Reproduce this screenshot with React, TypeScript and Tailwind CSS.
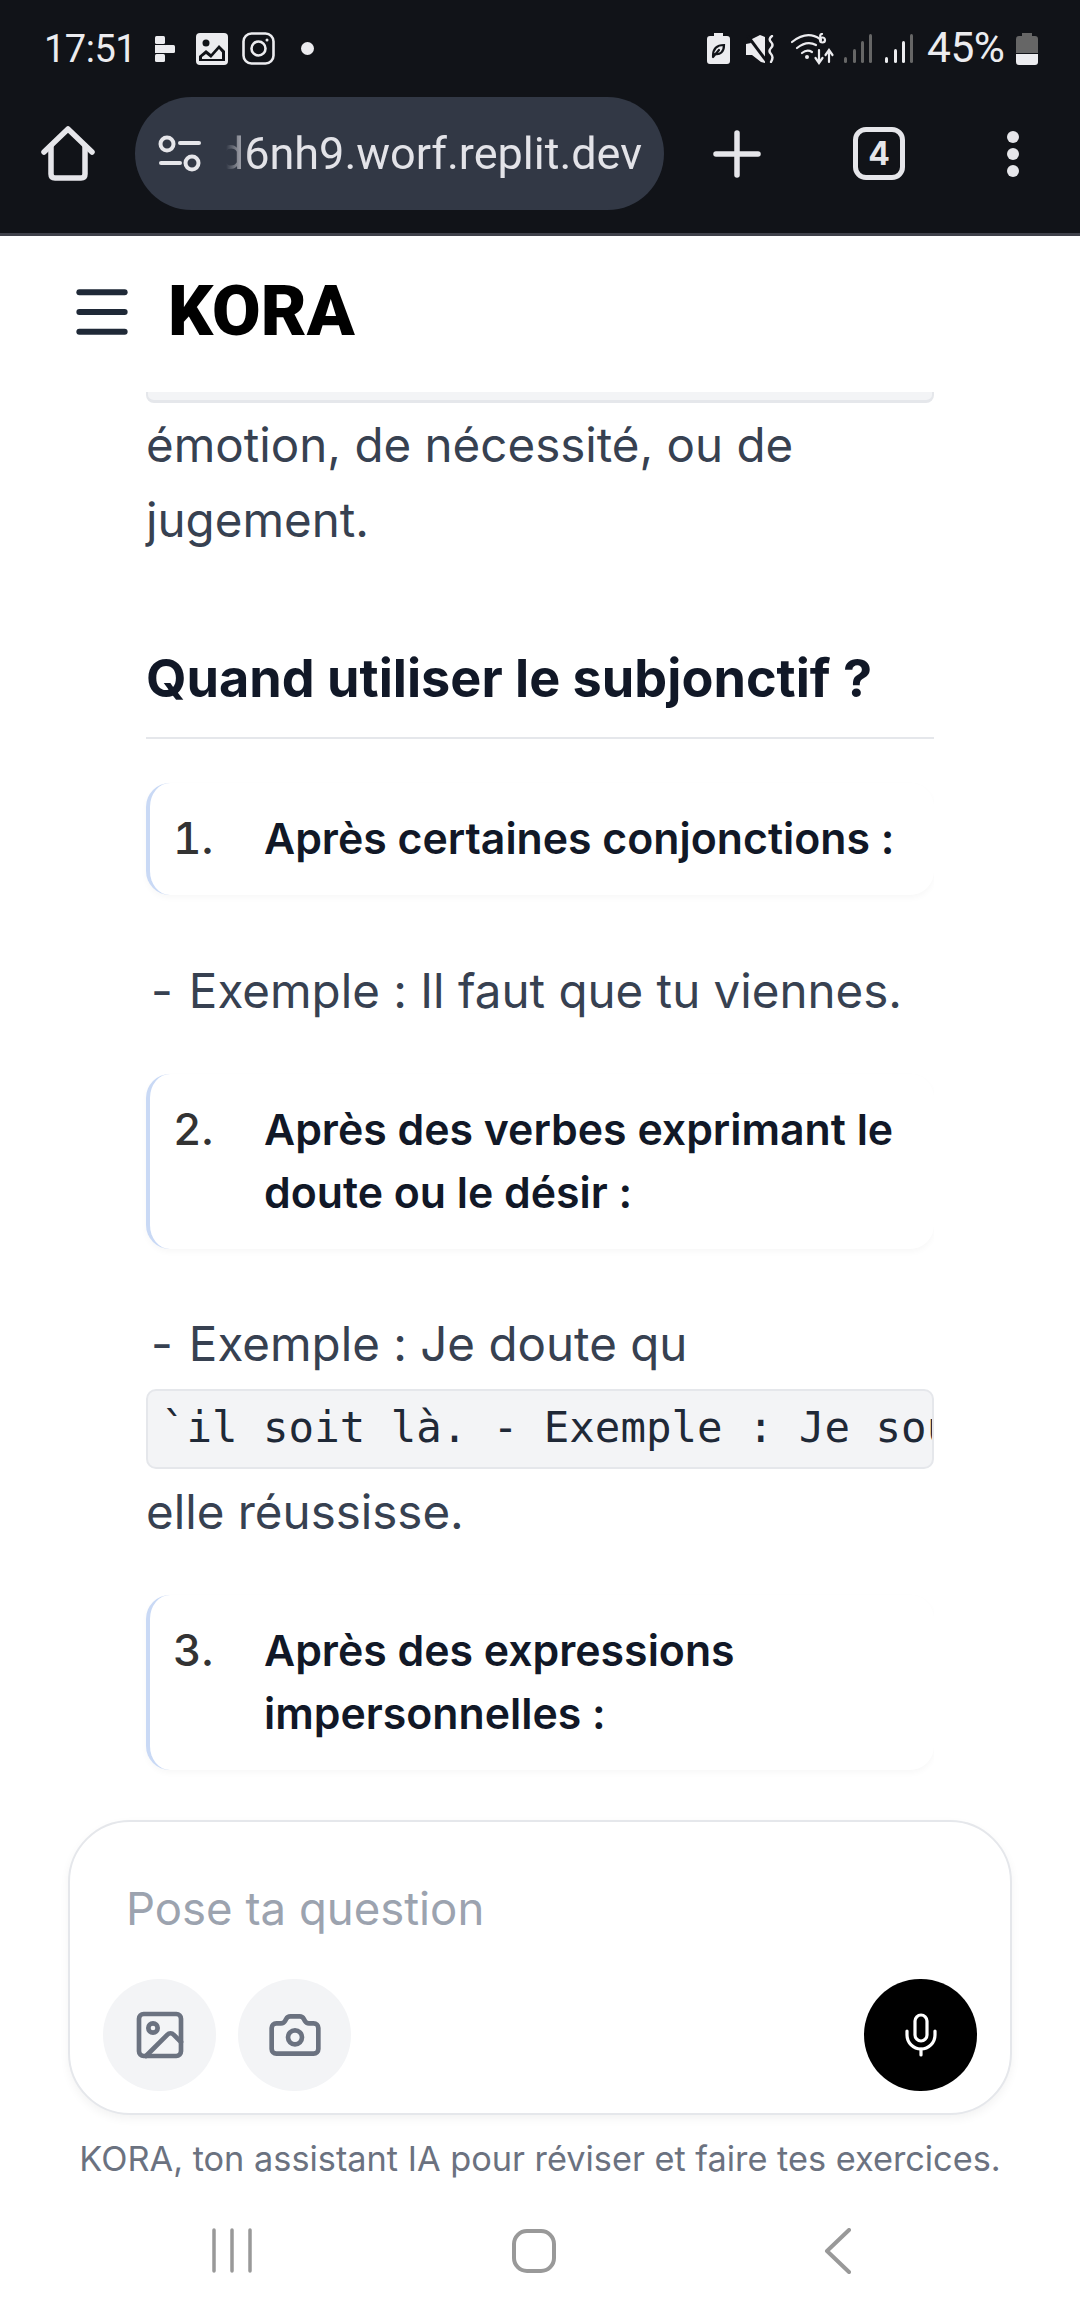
import { Image, Camera, Mic, Menu } from "lucide-react";

const inter = "font-['Inter',sans-serif]";

function Toolbar() {
  return (
    <div className="flex items-center h-[113px]">
      <svg width="54" height="55" viewBox="0 0 54 55" fill="none" stroke="#e6e6ea" strokeWidth="5.5" strokeLinecap="round" strokeLinejoin="round" className="ml-[41px]">
        <path d="M3 26 L27 3 L51 26" /><path d="M10 20 V48 Q10 52 14 52 H40 Q44 52 44 48 V20" />
      </svg>
      <div className="ml-[40px] w-[529px] h-[113px] rounded-full bg-[#323845] flex items-center">
        <svg width="44" height="37" viewBox="0 0 44 37" fill="none" stroke="#e6e6ea" strokeWidth="4" strokeLinecap="round" className="ml-[23px] shrink-0">
          <circle cx="9" cy="9" r="6.5" /><path d="M22 8 H41" /><path d="M3 28 H22" /><circle cx="34" cy="28" r="6.5" />
        </svg>
        <div className="ml-[24px] w-[416px] overflow-hidden flex justify-end [mask-image:linear-gradient(to_right,transparent,black_24px)]">
          <span className="font-['Roboto',sans-serif] text-[45px] leading-[52px] text-[#e3e3e8] whitespace-nowrap shrink-0">d6nh9.worf.replit.dev</span>
        </div>
      </div>
      <svg width="48" height="48" viewBox="0 0 48 48" stroke="#e6e6ea" strokeWidth="5.5" strokeLinecap="round" className="ml-[49px]">
        <path d="M3 24 H45" /><path d="M24 3 V45" />
      </svg>
      <div className="ml-[92px] w-[52px] h-[53px] rounded-[13px] border-[5px] border-[#e6e6ea] flex items-center justify-center">
        <span className={`${inter} text-[32px] font-bold leading-none text-[#e6e6ea]`}>4</span>
      </div>
      <div className="ml-[102px] flex flex-col gap-[5px]">
        <div className="w-[12px] h-[12px] rounded-full bg-[#e6e6ea]" />
        <div className="w-[12px] h-[12px] rounded-full bg-[#e6e6ea]" />
        <div className="w-[12px] h-[12px] rounded-full bg-[#e6e6ea]" />
      </div>
    </div>
  );
}

function Card({ n, lines }: { n: string; lines: string[] }) {
  return (
    <div className="flex border-l-[4px] border-[#c9d9f5] rounded-[24px] bg-white shadow-[0_3px_6px_rgba(0,0,0,0.03)] py-[24px] pl-[23px]">
      <span className="w-[91px] shrink-0 text-[44px] leading-[63.5px] font-medium tabular-nums text-[#333]">{n}</span>
      <span className="text-[42.8px] leading-[63.5px] font-semibold text-[#111827]">
        {lines.map((l) => (
          <span key={l} className="block whitespace-nowrap">{l}</span>
        ))}
      </span>
    </div>
  );
}

export default function App() {
  return (
    <div className={`${inter} [font-feature-settings:'calt'_0] w-[1080px] h-[2316px] flex flex-col overflow-hidden bg-white`}>
      <div className="h-[233px] bg-[#111318] shrink-0">
        <div className="flex items-center h-[97px]">
          <span className="font-['Roboto',sans-serif] text-[38px] leading-none text-[#ececef] ml-[44px] w-[90px] tracking-[-0.5px]">17:51</span>
          <svg width="20" height="26" viewBox="0 0 20 26" fill="#ececef" className="ml-[21px]">
            <rect x="0" y="0" width="10" height="8" rx="1.5" /><rect x="9" y="9" width="11" height="8" rx="1.5" /><rect x="0" y="9" width="10" height="8" /><rect x="0" y="18" width="10" height="8" rx="1.5" />
          </svg>
          <svg width="32" height="32" viewBox="0 0 32 32" className="ml-[21px]">
            <rect width="32" height="32" rx="4" fill="#ececef" />
            <circle cx="10" cy="10" r="3.5" fill="#111318" />
            <path d="M3 28 V23 L10 17 L15 21 L23 12 L29 18 V28 Z" fill="#111318" />
            <path d="M6 26 V24 L10 21 L15 25 L23 16 L26 19.500 V26 Z" fill="#ececef" />
          </svg>
          <svg width="33" height="33" viewBox="0 0 33 33" fill="none" stroke="#ececef" strokeWidth="2.6" className="ml-[14px]">
            <rect x="1.500" y="1.500" width="30" height="30" rx="8" /><circle cx="16.500" cy="16.500" r="7" /><circle cx="25" cy="8" r="1.500" fill="#ececef" stroke="none" />
          </svg>
          <div className="w-[13px] h-[13px] rounded-full bg-[#ececef] ml-[26px]" />
          <svg width="23" height="31" viewBox="0 0 23 31" className="ml-[393px]">
            <path d="M7 0 H16 V3 H20 Q23 3 23 6 V28 Q23 31 20 31 H3 Q0 31 0 28 V6 Q0 3 3 3 H7 Z" fill="#ececef" />
            <path d="M6 23 C6 15 11 12 17 12 C17 19 13 22 8 21 M6 24 L12 17" fill="none" stroke="#111318" strokeWidth="2.2" strokeLinecap="round" />
          </svg>
          <svg width="30" height="28" viewBox="0 0 30 28" fill="#ececef" className="ml-[16px]">
            <path d="M0 9 L5 8 L4 5 L14 0 L19 2 V28 L15 27 L6 20 H0 Z" />
            <path d="M1 0 L22 28" stroke="#111318" strokeWidth="3" />
            <path d="M26 1 Q22 4 25 7 Q28 10 25 13 Q22 16 25 19 Q28 22 25 27" fill="none" stroke="#ececef" strokeWidth="2.4" strokeLinecap="round" />
          </svg>
          <svg width="44" height="32" viewBox="0 0 44 32" fill="none" stroke="#ececef" strokeWidth="2.2" strokeLinecap="round" className="ml-[15px]">
            <path d="M1 9 Q16 -3 29 6" /><path d="M6 15 Q16 7 25 12" /><path d="M11 20 Q16 16 21 19" /><circle cx="16" cy="24" r="2" fill="#ececef" stroke="none" />
            <path d="M30 7 Q28 1 31 1 M29 7 a2.500 2.500 0 1 0 5 0 a2.500 2.500 0 1 0 -5 0" />
            <path d="M28 17 V29 M24.500 25 L28 30 L31.500 25" /><path d="M38 29 V18 M34.500 22 L38 17 L41.500 22" />
          </svg>
          <svg width="28" height="29" viewBox="0 0 28 29" className="ml-[9px]">
            <rect x="0" y="23" width="3" height="6" rx="1.500" fill="#666" /><rect x="9" y="15" width="3" height="14" rx="1.500" fill="#666" /><rect x="17" y="7" width="3" height="22" rx="1.500" fill="#666" /><rect x="25" y="0" width="3" height="29" rx="1.500" fill="#666" />
          </svg>
          <svg width="28" height="29" viewBox="0 0 28 29" className="ml-[13px]">
            <rect x="0" y="23" width="3" height="6" rx="1.500" fill="#ececef" /><rect x="9" y="15" width="3" height="14" rx="1.500" fill="#ececef" /><rect x="17" y="7" width="3" height="22" rx="1.500" fill="#ececef" /><rect x="25" y="0" width="3" height="29" rx="1.500" fill="#666" />
          </svg>
          <span className="font-['Roboto',sans-serif] text-[42.5px] leading-none text-[#ececef] ml-[14px] w-[89px] tracking-[-0.5px] whitespace-nowrap">45%</span>
          <svg width="22" height="32" viewBox="0 0 22 32">
            <path d="M6 0 H16 V3 H19 Q22 3 22 6 V20 H0 V6 Q0 3 3 3 H6 Z" fill="#666" />
            <path d="M0 21 H22 V29 Q22 32 19 32 H3 Q0 32 0 29 Z" fill="#ececef" />
          </svg>
        </div>
        <Toolbar />
      </div>
      <div className="h-[3px] bg-[#3f414a] shrink-0" />
      <div className="h-[156px] shrink-0 flex items-center pb-[6px]">
        <Menu size={68} strokeWidth={2.1} className="ml-[68px] mt-[2px] text-[#1f2937]" />
        <span className="ml-[32px] font-['Roboto',sans-serif] text-[70.5px] leading-none font-black text-black">KORA</span>
      </div>
      <div className="flex-1 min-h-0 overflow-hidden pl-[146px] w-[934px]">
        <div className="h-[11px] bg-[#f3f4f6] border-x-[2px] border-b-[3px] border-[#e5e7eb] rounded-b-[8px]" />
        <p className="mt-[4px] text-[47.5px] leading-[75px] text-[#374151]">émotion, de nécessité, ou de<br />jugement.</p>
        <h3 className="mt-[85px] pb-[23px] text-[52.2px] leading-[72px] font-bold text-[#111827] border-b-[2px] border-[#e5e7eb] whitespace-nowrap">Quand utiliser le subjonctif ?</h3>
        <div className="mt-[44px]"><Card n="1." lines={["Après certaines conjonctions :"]} /></div>
        <p className="mt-[58px] text-[47.5px] leading-[75px] text-[#374151] whitespace-nowrap"><span className="ml-[5px] mr-[16px] inline-block">-</span>Exemple : Il faut que tu viennes.</p>
        <div className="mt-[46px]"><Card n="2." lines={["Après des verbes exprimant le", "doute ou le désir :"]} /></div>
        <p className="mt-[57px] text-[47.5px] leading-[75px] text-[#374151] whitespace-nowrap"><span className="ml-[5px] mr-[16px] inline-block">-</span>Exemple : Je doute qu</p>
        <div className="mt-[8px] h-[80px] bg-[#f3f4f6] border-[2px] border-[#e5e7eb] rounded-[10px] overflow-hidden flex items-center pl-[13px]">
          <code className="font-['DejaVu_Sans_Mono',monospace] text-[42.4px] leading-none text-[#1f2937] whitespace-pre">`il soit là. - Exemple : Je souhaite</code>
        </div>
        <p className="mt-[5px] text-[47.5px] leading-[75px] text-[#374151]">elle réussisse.</p>
        <div className="mt-[46px]"><Card n="3." lines={["Après des expressions", "impersonnelles :"]} /></div>
      </div>
      <div className="mx-[68px] h-[295px] shrink-0 rounded-[62px] border-[2px] border-[#e5e7eb] bg-white shadow-[0_4px_10px_rgba(0,0,0,0.05)] pt-[55px] pb-[22px] pl-[33px] pr-[33px] flex flex-col justify-between">
        <div className="pl-[23px] text-[45.5px] leading-[64px] text-[#9ca3af]">Pose ta question</div>
        <div className="flex items-center gap-[22px]">
          <div className="w-[113px] h-[112px] rounded-full bg-[#f3f4f6] flex items-center justify-center"><Image size={56} strokeWidth={2} className="text-[#6b7280]" /></div>
          <div className="w-[113px] h-[112px] rounded-full bg-[#f3f4f6] flex items-center justify-center"><Camera size={56} strokeWidth={2} className="text-[#6b7280]" /></div>
          <div className="ml-auto w-[113px] h-[112px] rounded-full bg-black flex items-center justify-center"><Mic size={48} strokeWidth={1.6} className="text-white" /></div>
        </div>
      </div>
      <div className="mt-[19px] h-[50px] shrink-0 flex items-center justify-center text-[34.3px] leading-none text-[#6b7280] whitespace-nowrap">KORA, ton assistant IA pour réviser et faire tes exercices.</div>
      <div className="h-[132px] shrink-0 flex items-start pt-[44px] pl-[211px]">
        <svg width="42" height="45" viewBox="0 0 42 45" stroke="#999" strokeWidth="3.500" strokeLinecap="round"><path d="M3 2 V43" /><path d="M21 2 V43" /><path d="M39 2 V43" /></svg>
        <svg width="46" height="46" viewBox="0 0 46 46" fill="none" stroke="#999" strokeWidth="4" className="ml-[258px]"><rect x="3" y="3" width="40" height="40" rx="13" /></svg>
        <svg width="30" height="46" viewBox="0 0 30 46" fill="none" stroke="#999" strokeWidth="4" strokeLinecap="round" strokeLinejoin="round" className="ml-[266px]"><path d="M26 2 L4 23 L26 44" /></svg>
      </div>
    </div>
  );
}
